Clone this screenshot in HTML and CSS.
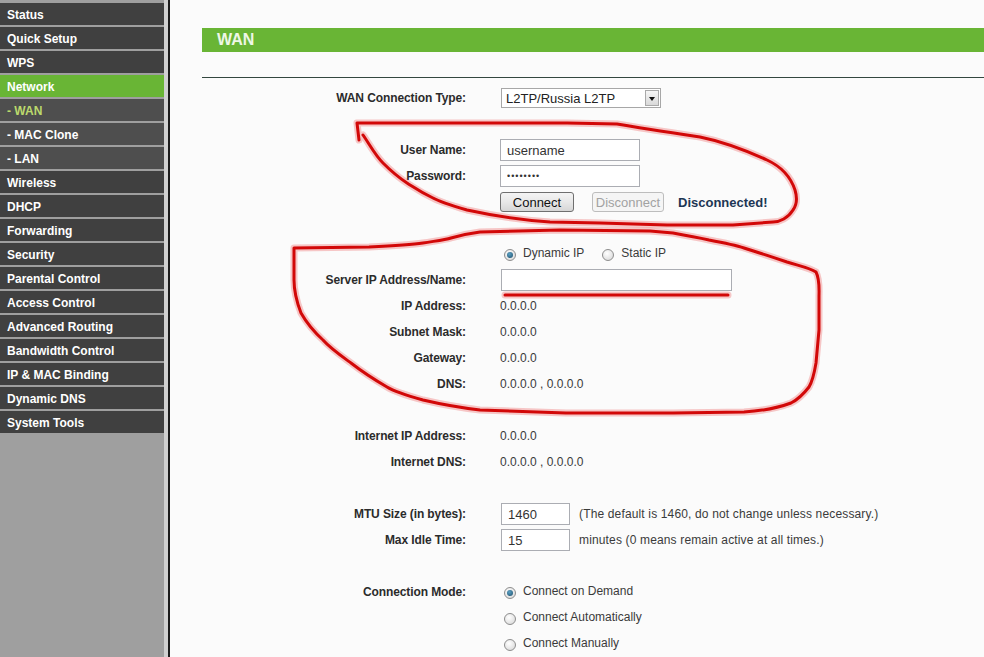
FILE: index.html
```html
<!DOCTYPE html>
<html lang="en">
<head>
    <meta charset="UTF-8">
    <title>WAN</title>
    <link rel="stylesheet" href="styles.css">
</head>
<body>

<div class="page">
    <!-- Menu lateral -->
    <nav class="sidebar">
        <ul class="menu">
            <li>Status</li>
            <li>Quick Setup</li>
            <li>WPS</li>
            <li class="active">Network</li>
            <li class="sub current">- WAN</li>
            <li class="sub">- MAC Clone</li>
            <li class="sub">- LAN</li>
            <li>Wireless</li>
            <li>DHCP</li>
            <li>Forwarding</li>
            <li>Security</li>
            <li>Parental Control</li>
            <li>Access Control</li>
            <li>Advanced Routing</li>
            <li>Bandwidth Control</li>
            <li>IP &amp; MAC Binding</li>
            <li>Dynamic DNS</li>
            <li>System Tools</li>
        </ul>
    </nav>
    <div class="edge"></div>

    <main class="content">
        <div class="title">WAN</div>

        <div class="form">
            <div class="row">
                <span class="label">WAN Connection Type:</span>
                <div class="value">
                    <div class="select">
                        <span>L2TP/Russia L2TP</span>
                        <span class="arrow"></span>
                    </div>
                </div>
            </div>
            <div class="row"></div>

            <div class="row">
                <span class="label">User Name:</span>
                <div class="value"><input class="field" type="text" value="username"></div>
            </div>
            <div class="row">
                <span class="label">Password:</span>
                <div class="value"><input class="field pass" type="password" value="12345678"></div>
            </div>
            <div class="row">
                <span class="label"></span>
                <div class="value">
                    <button class="btn">Connect</button>
                    <button class="btn off" disabled>Disconnect</button>
                    <span class="status">Disconnected!</span>
                </div>
            </div>
            <div class="row"></div>

            <div class="row">
                <span class="label"></span>
                <div class="value radios">
                    <span class="radio on"></span><span class="opt">Dynamic IP</span>
                    <span class="radio"></span><span class="opt">Static IP</span>
                </div>
            </div>
            <div class="row">
                <span class="label">Server IP Address/Name:</span>
                <div class="value"><input class="field wide" type="text" value=""></div>
            </div>
            <div class="row">
                <span class="label">IP Address:</span>
                <div class="value">0.0.0.0</div>
            </div>
            <div class="row">
                <span class="label">Subnet Mask:</span>
                <div class="value">0.0.0.0</div>
            </div>
            <div class="row">
                <span class="label">Gateway:</span>
                <div class="value">0.0.0.0</div>
            </div>
            <div class="row">
                <span class="label">DNS:</span>
                <div class="value">0.0.0.0 , 0.0.0.0</div>
            </div>
            <div class="row"></div>

            <div class="row">
                <span class="label">Internet IP Address:</span>
                <div class="value">0.0.0.0</div>
            </div>
            <div class="row">
                <span class="label">Internet DNS:</span>
                <div class="value">0.0.0.0 , 0.0.0.0</div>
            </div>
            <div class="row"></div>

            <div class="row">
                <span class="label">MTU Size (in bytes):</span>
                <div class="value">
                    <input class="field short" type="text" value="1460">
                    <span class="note">(The default is 1460, do not change unless necessary.)</span>
                </div>
            </div>
            <div class="row">
                <span class="label">Max Idle Time:</span>
                <div class="value">
                    <input class="field short" type="text" value="15">
                    <span class="note">minutes (0 means remain active at all times.)</span>
                </div>
            </div>
            <div class="row"></div>

            <div class="row">
                <span class="label">Connection Mode:</span>
                <div class="value radios">
                    <span class="radio on"></span><span class="opt">Connect on Demand</span>
                </div>
            </div>
            <div class="row">
                <span class="label"></span>
                <div class="value radios">
                    <span class="radio"></span><span class="opt">Connect Automatically</span>
                </div>
            </div>
            <div class="row">
                <span class="label"></span>
                <div class="value radios">
                    <span class="radio"></span><span class="opt">Connect Manually</span>
                </div>
            </div>
        </div>
    </main>
</div>

<!-- marcas rojas dibujadas encima -->
<svg class="marks" width="984" height="657" viewBox="0 0 984 657">
    <g class="halo">
        <path d="M359,140 L357,123 L433,123 L500,123 L567,123 L617,124 C640,128 660,131 700,137 C720,141 745,150 767,160 C780,166 790,175 795,190 C798,200 796,206 793,210 C788,218 780,222 773,222 L733,225 L667,225 L600,223 L550,222 C520,220 490,215 467,210 C450,205 440,202 433,198 C420,192 415,188 407,183 C395,175 390,170 383,163 C375,155 370,145 363,135"/>
        <path d="M294,248 L369,247 C390,246 410,245 423,243 C435,241 445,240 451,238 C465,234 472,233 480,232 L560,230 L650,231 L673,233 C690,236 700,238 709,240 C725,243 735,245 744,248 C760,253 775,258 787,262 C800,266 810,268 816,272 C820,280 819,290 819,297 L819,330 L816,363 C814,375 812,382 809,387 C802,396 797,400 791,403 C775,409 760,411 744,412 L673,413 L566,413 L480,410 C455,407 440,404 423,400 C405,395 395,392 387,387 C375,380 360,370 351,363 C340,355 330,348 323,340 C312,330 305,320 301,313 C296,300 294,290 294,280 Z"/>
        <path d="M505,295 L728,295"/>
    </g>
    <g class="ink">
        <path d="M359,140 L357,123 L433,123 L500,123 L567,123 L617,124 C640,128 660,131 700,137 C720,141 745,150 767,160 C780,166 790,175 795,190 C798,200 796,206 793,210 C788,218 780,222 773,222 L733,225 L667,225 L600,223 L550,222 C520,220 490,215 467,210 C450,205 440,202 433,198 C420,192 415,188 407,183 C395,175 390,170 383,163 C375,155 370,145 363,135"/>
        <path d="M294,248 L369,247 C390,246 410,245 423,243 C435,241 445,240 451,238 C465,234 472,233 480,232 L560,230 L650,231 L673,233 C690,236 700,238 709,240 C725,243 735,245 744,248 C760,253 775,258 787,262 C800,266 810,268 816,272 C820,280 819,290 819,297 L819,330 L816,363 C814,375 812,382 809,387 C802,396 797,400 791,403 C775,409 760,411 744,412 L673,413 L566,413 L480,410 C455,407 440,404 423,400 C405,395 395,392 387,387 C375,380 360,370 351,363 C340,355 330,348 323,340 C312,330 305,320 301,313 C296,300 294,290 294,280 Z"/>
        <path d="M505,295 L728,295"/>
    </g>
</svg>

</body>
</html>
```

FILE: styles.css
```css
body {
    margin: 0;
    position: relative;
    font-family: "Liberation Sans", Arial, sans-serif;
    font-size: 12px;
    color: #333;
    background-color: #fbfbfb;
}
.page {
    display: flex;
    min-height: 657px;
}

/* menu */
.sidebar {
    width: 164px;
    background-color: #9f9f9f;
    border-right: 4px solid #d0d0d0;
}
.menu {
    list-style: none;
    margin: 0;
    padding: 3px 0 0;
}
.menu li {
    height: 22px;
    line-height: 24px;
    margin-bottom: 2px;
    padding-left: 7px;
    background-color: #404040;
    color: #fff;
    font-weight: bold;
}
.menu li.active {
    background-color: #69b535;
}
.menu li.sub {
    background-color: #4e4e4e;
}
.menu li.current {
    color: #bcd96c;
}
.edge {
    width: 2px;
    background-color: #1c1c1c;
}

/* contenido */
.content {
    flex: 1;
    padding: 28px 0 0 32px;
}
.title {
    height: 24px;
    line-height: 24px;
    padding-left: 15px;
    background-color: #69b535;
    color: #eef7e6;
    font-size: 16px;
    font-weight: bold;
}
.form {
    margin-top: 25px;
    padding-top: 7px;
    border-top: 1px solid #33473f;
}
.row {
    display: grid;
    grid-template-columns: 264px 1fr;
    column-gap: 34px;
    height: 26px;
    align-items: center;
}
.label {
    text-align: right;
    font-weight: bold;
    color: #2b2b2b;
    letter-spacing: -0.1px;
}
.value {
    display: flex;
    align-items: center;
    color: #3a3a3a;
}

.select {
    display: flex;
    align-items: center;
    justify-content: space-between;
    width: 160px;
    height: 20px;
    margin-left: 1px;
    box-sizing: border-box;
    border: 1px solid #a7a7a7;
    background: #fff;
    font-size: 13px;
    color: #222;
    padding-left: 4px;
}
.arrow {
    position: relative;
    width: 14px;
    height: 16px;
    margin-right: 1px;
    box-sizing: border-box;
    border: 1px solid #a9a9a9;
    background: linear-gradient(#f6f6f6, #d9d9d9);
}
.arrow::after {
    content: "";
    position: absolute;
    left: 3px;
    top: 6px;
    border-left: 3px solid transparent;
    border-right: 3px solid transparent;
    border-top: 4px solid #111;
}

.field {
    width: 140px;
    height: 22px;
    box-sizing: border-box;
    border: 1px solid #abadb3;
    background: #fff;
    padding: 0 6px;
    font-family: inherit;
    font-size: 13px;
    color: #333;
    outline: none;
}
.field.pass {
    font-size: 9px;
    letter-spacing: 1px;
}
.field.wide {
    width: 231px;
    margin-left: 1px;
}
.field.short {
    width: 69px;
    margin-left: 1px;
}
.note {
    margin-left: 9px;
    letter-spacing: 0.15px;
}

.btn {
    width: 74px;
    height: 20px;
    padding: 0;
    box-sizing: border-box;
    border: 1px solid #6f6f6f;
    border-radius: 3px;
    background: linear-gradient(#f4f4f4 0%, #e8e8e8 50%, #d6d6d6 100%);
    font-family: inherit;
    font-size: 13px;
    color: #111;
}
.btn.off {
    width: 72px;
    margin-left: 18px;
    border-color: #bdbdbd;
    background: #f5f5f5;
    color: #a2a2a2;
}
.status {
    margin-left: 14px;
    font-size: 13px;
    font-weight: bold;
    color: #1d3654;
}

.radio {
    position: relative;
    width: 12px;
    height: 12px;
    margin: 2px 7px 0 4px;
    box-sizing: border-box;
    border: 1px solid #8d8d8d;
    border-radius: 50%;
    background: radial-gradient(circle at 40% 35%, #fff, #d4d4d4);
}
.radio.on::after {
    content: "";
    position: absolute;
    left: 2px;
    top: 2px;
    width: 6px;
    height: 6px;
    border-radius: 50%;
    background: radial-gradient(circle at 40% 35%, #5aa0c4, #1f4f6a);
}
.opt {
    margin-right: 14px;
    margin-top: -2px;
}

/* marcas */
.marks {
    position: absolute;
    top: 0;
    left: 0;
    pointer-events: none;
}
.marks path {
    fill: none;
    stroke-linecap: round;
    stroke-linejoin: round;
}
.halo path {
    stroke: rgba(230, 40, 40, 0.25);
    stroke-width: 7;
}
.ink path {
    stroke: #d20808;
    stroke-width: 3;
}
```
